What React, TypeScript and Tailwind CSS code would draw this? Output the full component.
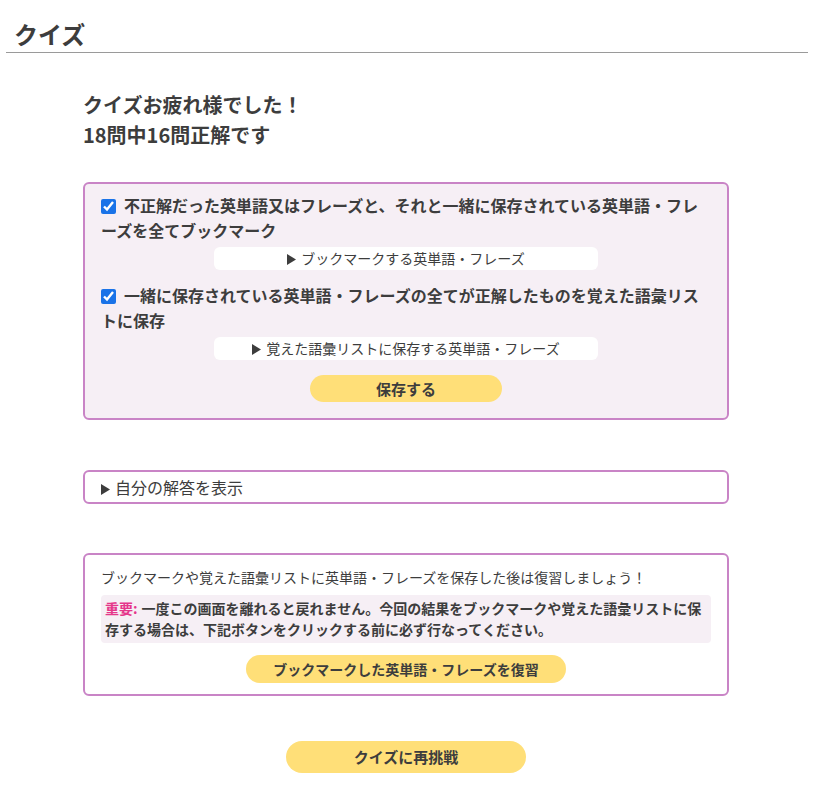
import React from "react";

const font = "font-['Noto_Sans_CJK_JP','Noto_Sans',sans-serif]";

function Marker() {
  return (
    <svg width="9" height="11" viewBox="0 0 9 11" className="mr-[5px] inline-block align-[-1px]">
      <path d="M0 0 L9 5.5 L0 11 Z" fill="#3d3d3d" />
    </svg>
  );
}

function DetailBar({ label }: { label: string }) {
  return (
    <div className="mx-auto mt-1 h-[23px] w-[384px] rounded-md bg-white text-center text-[14px] leading-[23px]">
      <Marker />
      {label}
    </div>
  );
}

function CheckRow({ text }: { text: string }) {
  return (
    <label className="block text-[16px] font-bold leading-[25px]">
      <input
        type="checkbox"
        defaultChecked
        className="mr-2 inline-block h-[15px] w-[15px] align-[-2px] accent-[#1a73e8]"
      />
      {text}
    </label>
  );
}

export default function App() {
  return (
    <div className={`min-h-screen bg-white pb-8 text-[#3d3d3d] ${font}`}>
      <header className="mx-1.5 border-b border-[#9a9a9a] pt-4">
        <h1 className="pl-2 text-[24px] font-bold leading-[36px]">クイズ</h1>
      </header>

      <main className="mx-auto w-[646px] -translate-x-px">
        <h2 className="mt-[37px] text-[20px] font-bold leading-[30px]">
          クイズお疲れ様でした！
          <br />
          18問中16問正解です
        </h2>

        <section className="mt-8 rounded-md border-2 border-[#c984c6] bg-[#f6eff5] px-4 pb-4 pt-[9px]">
          <CheckRow text="不正解だった英単語又はフレーズと、それと一緒に保存されている英単語・フレーズを全てブックマーク" />
          <DetailBar label="ブックマークする英単語・フレーズ" />
          <div className="mt-[13px]">
            <CheckRow text="一緒に保存されている英単語・フレーズの全てが正解したものを覚えた語彙リストに保存" />
          </div>
          <DetailBar label="覚えた語彙リストに保存する英単語・フレーズ" />
          <button className="mx-auto mt-[15px] block h-[27px] w-[192px] rounded-full bg-[#ffdf78] text-[15px] font-bold leading-[27px]">
            保存する
          </button>
        </section>

        <section className="mt-[50px] rounded-md border-2 border-[#c984c6] bg-white px-4 text-[16px] leading-[30px]">
          <Marker />
          自分の解答を表示
        </section>

        <section className="mt-[49px] rounded-md border-2 border-[#c984c6] bg-white px-4 pb-[11px] pt-3">
          <p className="text-[14px] leading-[21px]">
            ブックマークや覚えた語彙リストに英単語・フレーズを保存した後は復習しましょう！
          </p>
          <p className="mt-[7px] rounded bg-[#f6eff5] px-1 py-[3px] text-[14px] font-bold leading-[21px]">
            <span className="mr-1 text-[#e5378b]">重要:</span>一度この画面を離れると戻れません。今回の結果をブックマークや覚えた語彙リストに保存する場合は、下記ボタンをクリックする前に必ず行なってください。
          </p>
          <button className="mx-auto mt-3 block h-[28px] w-[320px] rounded-full bg-[#ffdf78] text-[14px] font-bold leading-[28px]">
            ブックマークした英単語・フレーズを復習
          </button>
        </section>

        <button className="mx-auto mt-[45px] block h-[32px] w-[240px] rounded-full bg-[#ffdf78] text-[15px] font-bold leading-[32px]">
          クイズに再挑戦
        </button>
      </main>
    </div>
  );
}
